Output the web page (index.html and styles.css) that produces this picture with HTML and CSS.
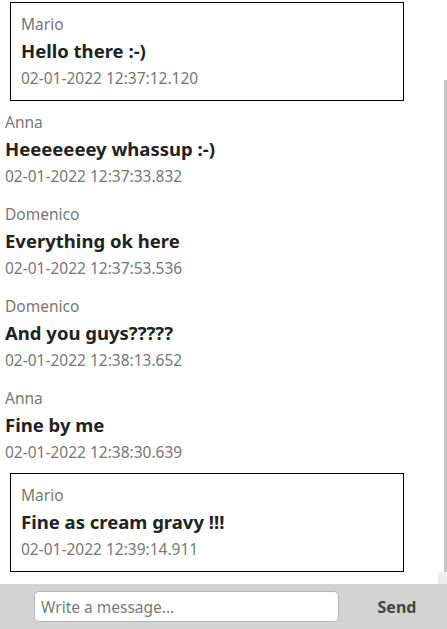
FILE: index.html
```html
<!DOCTYPE html>
<html lang="en">
<head>
<meta charset="utf-8">
<title>Chat</title>
<link rel="stylesheet" href="styles.css">
</head>
<body>
<div class="chat">
  <div class="messages">
    <div class="msg mine">
      <div class="author">Mario</div>
      <div class="text">Hello there :-)</div>
      <div class="time">02-01-2022 12:37:12.120</div>
    </div>
    <div class="msg">
      <div class="author">Anna</div>
      <div class="text">Heeeeeeey whassup :-)</div>
      <div class="time">02-01-2022 12:37:33.832</div>
    </div>
    <div class="msg">
      <div class="author">Domenico</div>
      <div class="text">Everything ok here</div>
      <div class="time">02-01-2022 12:37:53.536</div>
    </div>
    <div class="msg">
      <div class="author">Domenico</div>
      <div class="text">And you guys?????</div>
      <div class="time">02-01-2022 12:38:13.652</div>
    </div>
    <div class="msg">
      <div class="author">Anna</div>
      <div class="text">Fine by me</div>
      <div class="time">02-01-2022 12:38:30.639</div>
    </div>
    <div class="msg mine">
      <div class="author">Mario</div>
      <div class="text">Fine as cream gravy !!!</div>
      <div class="time">02-01-2022 12:39:14.911</div>
    </div>
    <div class="scroll-track"></div>
    <div class="scroll-corner"></div>
  </div>
  <form class="composer">
    <input class="input" type="text" placeholder="Write a message...">
    <button class="send" type="button">Send</button>
  </form>
</div>
</body>
</html>
```

FILE: styles.css
```css
* { box-sizing: border-box; }
html, body {
  margin: 0;
  padding: 0;
  background: #fff;
}
body {
  font-family: "Noto Sans", "Open Sans", sans-serif;
  font-size: 16px;
  line-height: 1.5;
  color: #212529;
}
.chat {
  display: flex;
  flex-direction: column;
  height: 629px;
  width: 447px;
}
.messages {
  position: relative;
  flex: 1;
  padding: 2px 9px 0 0;
  overflow: hidden;
}
.msg {
  padding: 5px 5px;
  margin-bottom: 4px;
}
.msg.mine {
  width: 90%;
  margin-left: 10px;
  padding: 9px 10px 10px;
  border: 1px solid #000;
}
.author, .time {
  color: #777;
  font-size: 15.5px;
  line-height: 24px;
}
.text {
  font-weight: 700;
  font-size: 18.5px;
  line-height: 30px;
  color: #222;
}
.scroll-track {
  position: absolute;
  right: 0;
  top: 80px;
  bottom: 12px;
  width: 3px;
  background: #c4c4c4;
}
.scroll-corner {
  position: absolute;
  right: 0;
  bottom: 0;
  width: 9px;
  height: 12px;
  background: #ececec;
}
.composer {
  height: 45px;
  flex: 0 0 45px;
  margin: 0;
  background: #d3d3d3;
  display: flex;
  align-items: center;
  padding-left: 34px;
}
.input {
  width: 305px;
  height: 31px;
  border: 1px solid #b5b5b5;
  border-radius: 5px;
  background: #fff;
  padding: 0 6px;
  font-family: "Noto Sans", "Open Sans", sans-serif;
  font-size: 15.5px;
  color: #333;
  outline: none;
}
.input::placeholder {
  color: #7a7a7a;
}
.send {
  flex: 1;
  border: 0;
  background: transparent;
  font-family: "Noto Sans", "Open Sans", sans-serif;
  font-weight: 700;
  font-size: 16px;
  color: #444;
  padding: 0 0 0 8px;
  text-align: center;
}
```
